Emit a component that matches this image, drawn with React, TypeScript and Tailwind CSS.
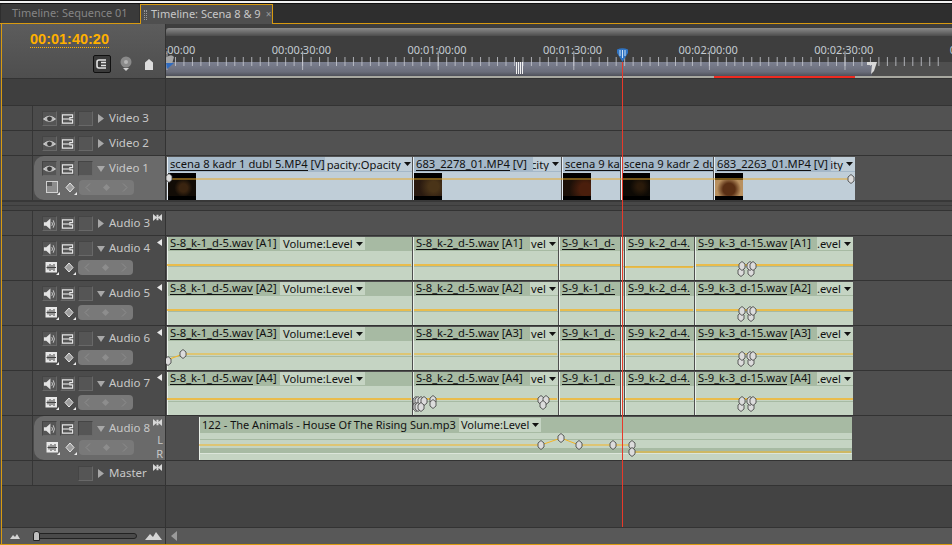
import type { ReactNode } from 'react';

const FONT = "font-['Noto_Sans',sans-serif]";
const AUDIO_X: [number, number][] = [[167, 411], [414, 557], [560, 620], [625, 693], [696, 853]];

function Eye() {
  return (
    <svg width="14" height="14" viewBox="0 0 14 14">
      <path d="M0.5 7 Q7 1 13.5 7 Q7 12 0.5 7Z" fill="#b8b8b8" stroke="#e8e8e8" strokeWidth="0.8" />
      <circle cx="7" cy="6.8" r="2.6" fill="#3a3a3a" />
    </svg>
  );
}

function Film() {
  return (
    <svg width="14" height="14" viewBox="0 0 14 14">
      <path d="M1.5 2.5H12.5V5.5H9.5V8H12.5V11.5H1.5Z" fill="none" stroke="#e8e8e8" strokeWidth="1.2" />
      <path d="M2 7H9" stroke="#e8e8e8" strokeWidth="1.2" />
    </svg>
  );
}

function Speaker() {
  return (
    <svg width="14" height="14" viewBox="0 0 14 14">
      <path d="M1 5H3.5L8 1V13L3.5 9H1Z" fill="#e4e4e4" />
      <path d="M9.5 5Q11 7 9.5 9M11 3Q13.6 7 11 11" fill="none" stroke="#cfcfcf" strokeWidth="1" />
    </svg>
  );
}

function CollapseBox() {
  return (
    <svg width="14" height="14" viewBox="0 0 14 14">
      <rect x="0.5" y="0.5" width="11" height="11" fill="#8c8c8c" stroke="#d0d0d0" />
      <rect x="1" y="1" width="5" height="4" fill="#585858" />
      <path d="M14 11V14H11Z" fill="#eee" />
    </svg>
  );
}

function WaveBox() {
  return (
    <svg width="14" height="14" viewBox="0 0 14 14">
      <rect x="0.5" y="1" width="11.5" height="10.5" fill="#e8e8e8" />
      <path d="M1.5 6.5H11M3 4.5V8.5M5 3V10M7 4V9M9 3V10" stroke="#444" strokeWidth="1" />
      <path d="M14 11V14H11Z" fill="#eee" />
    </svg>
  );
}

function KeyDiamond() {
  return (
    <svg width="12" height="14" viewBox="0 0 12 14">
      <path d="M5 2L9 6.5L5 11L1 6.5Z" fill="#9d9d9d" stroke="#e8e8e8" />
      <path d="M12 11V14H9Z" fill="#eee" />
    </svg>
  );
}

function Caret({ open }: { open: boolean }) {
  return open ? (
    <svg width="8" height="8" viewBox="0 0 8 8"><path d="M0 1H8L4 7Z" fill="#a8a8a8" /></svg>
  ) : (
    <svg width="7" height="9" viewBox="0 0 7 9"><path d="M0 0L6 4.5L0 9Z" fill="#a8a8a8" /></svg>
  );
}

function Bowtie() {
  return (
    <svg width="9" height="7" viewBox="0 0 9 7"><path d="M0 0L3.5 3V0.8H5.5V3L9 0V7L5.5 4V6.2H3.5V4L0 7Z" fill="#d8d8d8" /></svg>
  );
}

function NavPill() {
  return (
    <div className="flex w-[55px] h-[15px] items-center justify-around rounded-[4px] bg-[#797979]">
      <svg width="6" height="9" viewBox="0 0 6 9"><path d="M5 0.5L1 4.5L5 8.5" fill="none" stroke="#8d8d8d" /></svg>
      <svg width="7" height="7" viewBox="0 0 7 7"><path d="M3.5 0L7 3.5L3.5 7L0 3.5Z" fill="#8d8d8d" /></svg>
      <svg width="6" height="9" viewBox="0 0 6 9"><path d="M1 0.5L5 4.5L1 8.5" fill="none" stroke="#8d8d8d" /></svg>
    </div>
  );
}

function IconBox({ children }: { children?: ReactNode }) {
  return (
    <div className="flex w-[15px] h-[15px] items-center justify-center border border-t-[#454545] border-l-[#454545] border-b-[#686868] border-r-[#686868] bg-[#555555]">
      {children}
    </div>
  );
}

type HeaderProps = {
  name: string;
  audio?: boolean;
  open?: boolean;
  selected?: boolean;
  master?: boolean;
  bowtie?: boolean;
  mono?: boolean;
  lr?: boolean;
};

function TrackHeader({ name, audio, open, selected, master, bowtie, mono, lr }: HeaderProps) {
  return (
    <div className="flex w-[164px] shrink-0 h-full border-r border-[#333333] bg-[#4b4b4b]">
      <div className="w-[31px] shrink-0 border-r border-[#363636]" />
      <div className={`relative flex flex-1 flex-col gap-[4px] pl-[8px] pt-[5px] ${selected ? 'ml-[1px] rounded-l-[10px] bg-[#6a6a6a]' : ''}`}>
        <div className={`flex items-center ${selected ? '' : 'ml-[1px]'}`}>
          {master ? (
            <div className="w-[36px]" />
          ) : (
            <div className="flex gap-[3px] mr-[3px]">
              <IconBox>{audio ? <Speaker /> : <Eye />}</IconBox>
              <IconBox><Film /></IconBox>
            </div>
          )}
          <IconBox />
          <div className="flex w-[16px] justify-center"><Caret open={!!open} /></div>
          <span className="-mt-[2px] text-[11.5px] leading-[15px] text-[#c8c8c8]">{name}</span>
        </div>
        {open && (
          <div className="flex items-center">
            <div className="flex w-[21px] justify-center">{audio ? <WaveBox /> : <CollapseBox />}</div>
            <div className="flex w-[16px] justify-center"><KeyDiamond /></div>
            <NavPill />
          </div>
        )}
        {bowtie && <div className="absolute right-[3px] top-[3px] flex"><Bowtie /></div>}
        {mono && (
          <svg className="absolute right-[2px] top-[3px]" width="6" height="7" viewBox="0 0 6 7"><path d="M5 0V7L0 3.5Z" fill="#e8e8e8" /></svg>
        )}
        {lr && (
          <div className="absolute right-[2px] top-[17px] flex flex-col gap-[1px] text-[11px] leading-[13px] text-[#c8c8c8] items-end">
            <span>L</span>
            <span>R</span>
          </div>
        )}
      </div>
    </div>
  );
}

type ClipData = {
  w: number;
  name: string;
  tag?: string;
  drop?: string;
  dropW?: number;
  thumb?: string;
  gap?: number;
};

const Arrow = () => (
  <svg className="shrink-0 ml-[3px]" width="7" height="4" viewBox="0 0 7 4"><path d="M0 0H7L3.5 4Z" fill="#111" /></svg>
);

function VideoClip({ c }: { c: ClipData }) {
  return (
    <div className="flex flex-col shrink-0 h-full border-l border-[#e6eef5] bg-[#c0ced8] overflow-hidden" style={{ width: c.w, marginRight: c.gap ?? 1 }}>
      <div className="flex h-[15px] shrink-0 items-start bg-[#a5b8c8] pl-[2px] text-[11.2px] leading-[13px] text-[#111] whitespace-nowrap overflow-hidden">
        <span className="border-b border-[#111]">{c.name}</span>
        {c.tag && <span className="ml-[3px]">{c.tag}</span>}
        {c.drop && (
          <span className="ml-auto flex h-[14px] shrink-0 items-center justify-end overflow-hidden bg-[#c0ced8] pr-[2px]" style={{ width: c.dropW }}>
            {c.drop}<Arrow />
          </span>
        )}
      </div>
      <div className={`mt-[1px] h-[29px] w-[28px] ${c.thumb}`} />
    </div>
  );
}

function AudioClip({ c }: { c: ClipData }) {
  return (
    <div className="flex flex-col shrink-0 h-full border-l border-[#e9f0e8] bg-[#c5d4c3] overflow-hidden" style={{ width: c.w, marginRight: c.gap ?? 1 }}>
      <div className="flex h-[14px] shrink-0 items-start bg-[#a7baa3] pl-[2px] text-[11.2px] leading-[12px] text-[#111] whitespace-nowrap overflow-hidden">
        <span className="border-b border-[#111]">{c.name}</span>
        {c.tag && <span className="ml-[3px]">{c.tag}</span>}
        {c.drop && (
          <span className={`${c.name.includes('k-1_d-5') ? 'ml-[3px]' : 'ml-auto'} flex h-[13px] shrink-0 items-center justify-end overflow-hidden bg-[#c5d4c3] pr-[2px]`} style={{ width: c.dropW }}>
            {c.drop}<Arrow />
          </span>
        )}
      </div>
      <div className="h-[16px] shrink-0 border-b border-[#a7baa3]" />
    </div>
  );
}

const audioClips = (n: number): ClipData[] => [
  { w: 245, name: 'S-8_k-1_d-5.wav', tag: `[A${n}]`, drop: 'Volume:Level', dropW: 85 },
  { w: 145, name: 'S-8_k-2_d-5.wav', tag: `[A${n}]`, drop: 'vel', dropW: 28 },
  { w: 61, name: 'S-9_k-1_d-' },
  { w: 3, name: '' },
  { w: 69, name: 'S-9_k-2_d-4.' },
  { w: 158, name: 'S-9_k-3_d-15.wav', tag: `[A${n}]`, drop: '.evel', dropW: 36, gap: 0 },
];

const THUMB_A = "bg-[linear-gradient(#000_0_7px,transparent_7px_23px,#000_23px),radial-gradient(circle_at_55%_55%,#3a2410_0_4px,#120c06_9px)]";
const THUMB_B = "bg-[linear-gradient(#000_0_7px,transparent_7px_23px,#000_23px),radial-gradient(circle_at_70%_50%,#4a3418_0_5px,#2a1a10_14px)]";
const THUMB_C = "bg-[linear-gradient(#000_0_7px,transparent_7px_23px,#000_23px),radial-gradient(circle_at_80%_60%,#4a1e0c_0_6px,#1c1008_16px)]";
const THUMB_D = "bg-[linear-gradient(#000_0_7px,transparent_7px_23px,#000_23px),radial-gradient(circle_at_65%_50%,#2a1a0a_0_3px,#0e0a05_10px)]";
const THUMB_E = "bg-[linear-gradient(#000_0_7px,transparent_7px_23px,#000_23px),radial-gradient(circle_at_50%_60%,#5a2f14_0_6px,#b8905f_12px)]";

const videoClips: ClipData[] = [
  { w: 245, name: 'scena 8 kadr 1 dubl 5.MP4', tag: '[V]', drop: 'pacity:Opacity', dropW: 88, thumb: THUMB_A },
  { w: 148, name: '683_2278_01.MP4', tag: '[V]', drop: 'acity', dropW: 28, thumb: THUMB_B },
  { w: 58, name: 'scena 9 ka', thumb: THUMB_C },
  { w: 92, name: 'scena 9 kadr 2 du', thumb: THUMB_D },
  { w: 141, name: '683_2263_01.MP4', tag: '[V]', drop: 'ity', dropW: 24, gap: 0, thumb: THUMB_E },
];

function Key({ x, y }: { x: number; y: number }) {
  return <polygon points={`${x},${y - 4.5} ${x + 3},${y - 2} ${x + 3},${y + 2} ${x},${y + 4.5} ${x - 3},${y + 2} ${x - 3},${y - 2}`} fill="#dcdcdc" stroke="#3a3a3a" strokeWidth="0.8" />;
}

function Cluster() {
  return (
    <>
      <Key x={741} y={36} />
      <Key x={751} y={36} />
      <Key x={742} y={30} />
      <Key x={750} y={30} />
      <Key x={753} y={30} />
    </>
  );
}

function Overlay({ h, children }: { h: number; children: ReactNode }) {
  return (
    <svg className="absolute left-0 top-0 pointer-events-none" width="786" height={h} viewBox={`166 0 786 ${h}`}>
      {children}
    </svg>
  );
}

const orangeLines = (y: number, dy = 0) => (
  <>
    {AUDIO_X.map(([a, b], i) => (
      <line key={i} x1={a} x2={b} y1={i === 3 ? y + dy : y} y2={i === 3 ? y + dy : y} stroke="#f5b525" strokeWidth="1.5" />
    ))}
  </>
);

function AudioRow({ n, tag, children }: { n: number; tag: number; children?: ReactNode }) {
  return (
    <div className="flex h-[45px] border-t border-[#333333] bg-[#4f4f4f]">
      <TrackHeader name={`Audio ${n}`} audio open mono />
      <div className="relative flex flex-1 pl-[1px] pt-[1px] pb-0">
        {audioClips(tag).map((c, i) => <AudioClip key={i} c={c} />)}
        <Overlay h={44}>{children}</Overlay>
      </div>
    </div>
  );
}

function EmptyRow({ name, h, audio, bowtie, master }: { name: string; h: string; audio?: boolean; bowtie?: boolean; master?: boolean }) {
  return (
    <div className={`flex ${h} border-t border-[#333333] bg-[#525252]`}>
      <TrackHeader name={name} audio={audio} bowtie={bowtie} master={master} />
      <div className="flex-1" />
    </div>
  );
}

function Ruler() {
  const minor = Array.from({ length: 92 }, (_, i) => 1 + i * 8.475);
  const major = Array.from({ length: 6 }, (_, i) => 1 + i * 135.6);
  return (
    <div className="relative flex-1 flex flex-col bg-[#3e3e3e] overflow-hidden">
      <div className="mt-[4px] h-[8px] rounded-tl-[3px] bg-[linear-gradient(#8a8a8a,#6c6c6c_50%,#4c4c4c)]" />
      <div className="mt-[7px] flex -ml-[68px] text-[11px] leading-[13px] text-[#c4ccd2]">
        {['00:00:00:00', '00:00:30:00', '00:01:00:00', '00:01:30:00', '00:02:00:00', '00:02:30:00', '00:03:00:00'].map((t, i) => (
          <span key={i} className="w-[135.6px] shrink-0 text-center">{t}</span>
        ))}
      </div>
      <svg className="absolute left-0 top-[26px]" width="786" height="28" viewBox="0 0 786 28">
        <defs>
          <linearGradient id="wa" x1="0" y1="0" x2="0" y2="1">
            <stop offset="0" stopColor="#7c8090" />
            <stop offset="0.7" stopColor="#6a6d7a" />
            <stop offset="1" stopColor="#4f515a" />
          </linearGradient>
        </defs>
        <rect x="0" y="12" width="706" height="14" fill="url(#wa)" />
        <rect x="706" y="12" width="80" height="14" fill="#4f4f4f" />
        <rect x="0" y="26" width="786" height="2" fill="#a8a8a0" />
        <rect x="548" y="26" width="141" height="2" fill="#ee2a20" />
        {minor.map((x, i) => <line key={i} x1={x} x2={x} y1="7" y2="16" stroke="#c9ccd2" strokeWidth="0.8" />)}
        {major.map((x, i) => <line key={i} x1={x} x2={x} y1="1" y2="20" stroke="#c9ccd2" strokeWidth="0.8" />)}
        {[350.5, 352.5, 354.5, 356.5].map((x) => <line key={x} x1={x} x2={x} y1="12" y2="24" stroke="#f0f0f0" strokeWidth="1" />)}
        <path d="M701 12H711L708 21L705 24L706 15H701Z" fill="#d8d8d8" />
        <path d="M0 8Q5 3 8 7L6 14L1 17Z" fill="#a5a5a5" />
      </svg>
      <svg className="absolute left-0 top-[39px]" width="10" height="8" viewBox="0 0 10 8"><path d="M0 0H8L1 6Z" fill="#2f6bc0" /></svg>
    </div>
  );
}

export default function App() {
  return (
    <div className={`relative flex h-[545px] w-[952px] flex-col overflow-hidden bg-[#4f4f4f] ${FONT}`}>
      <div className="h-[1px] bg-[#111]" />
      <div className="h-[2px] bg-[#f2f2f2]" />
      <div className="h-[1px] bg-[#111]" />
      {/* tabs */}
      <div className="flex h-[20px] shrink-0 bg-[#2e2e2e] border-b border-[#d89a10] pl-[1px]">
        <div className="flex w-[138px] h-[19px] items-center rounded-t-[2px] bg-[#3a3a3a] pl-[11px] text-[11px] text-[#858585] whitespace-nowrap">Timeline: Sequence 01</div>
        <div className="ml-[1px] flex w-[133px] h-[20px] items-center border border-b-0 border-[#d89a10] bg-[#4f4f4f] pl-[3px] text-[11px] text-[#c8c8c8] whitespace-nowrap z-10">
          <span className="mr-[4px] h-[10px] w-[3px] border-l border-r border-dotted border-[#999]" />
          <span>Timeline: Scena 8 &amp; 9</span>
          <span className="ml-[5px] text-[10px] text-[#999]">×</span>
        </div>
      </div>

      <div className="flex flex-1 flex-col border-l border-[#d89a10] ml-[1px]">
        {/* header */}
        <div className="flex h-[54px] shrink-0">
          <div className="flex w-[164px] shrink-0 flex-col bg-[linear-gradient(#5c5c5c,#4e4e4e)] border-r border-[#333]">
            <div className="mt-[8px] ml-[28px] w-max border-b border-dotted border-[#ffb000] text-[14.5px] font-bold leading-[15px] font-['Liberation_Sans',sans-serif] text-[#ffb000]">00:01:40:20</div>
            <div className="mt-[7px] ml-[91px] flex items-center">
              <div className="flex w-[18px] h-[18px] items-center justify-center rounded-[2px] border border-[#111] bg-[#3a3a3a]">
                <svg width="14" height="14" viewBox="0 0 14 14">
                  <path d="M11 3H4Q2 3 2 5V9Q2 11 4 11H11M6 5.5H11M6 8.5H11" fill="none" stroke="#e4e4e4" strokeWidth="1.6" />
                </svg>
              </div>
              <svg width="12" height="16" viewBox="0 0 12 16" className="ml-[9px]">
                <circle cx="6" cy="6" r="5.5" fill="#8a8a8a" />
                <circle cx="6" cy="6" r="2" fill="#b5b5b5" />
                <path d="M3 12H9L6 15Z" fill="#d0d0d0" />
              </svg>
              <svg width="8" height="11" viewBox="0 0 8 11" className="ml-[13px]"><path d="M4 0L8 3.5V11H0V3.5Z" fill="#dcdcdc" /></svg>
            </div>
          </div>
          <Ruler />
        </div>

        {/* empty strip */}
        <div className="flex h-[27px] shrink-0 border-t border-[#333] bg-[#3f3f3f]">
          <div className="w-[164px] border-r border-[#333]" />
        </div>

        <EmptyRow name="Video 3" h="h-[25px]" />
        <EmptyRow name="Video 2" h="h-[25px]" />

        <div className="flex h-[45px] border-t border-[#333333] bg-[#525252]">
          <TrackHeader name="Video 1" open selected />
          <div className="relative flex flex-1 pl-[1px] pt-[1px]">
            {videoClips.map((c, i) => <VideoClip key={i} c={c} />)}
            <Overlay h={44}>
              <line x1="167" x2="851" y1="23" y2="23" stroke="#e8aa2c" strokeWidth="1" />
              <Key x={169} y={22} />
              <Key x={851} y={23} />
            </Overlay>
          </div>
        </div>

        {/* video / audio divider */}
        <div className="flex h-[10px] flex-col border-t-2 border-[#383838] bg-[#474747]">
          <div className="mt-[3px] h-[1px] bg-[#3a3a3a]" />
        </div>

        <EmptyRow name="Audio 3" audio bowtie h="h-[25px]" />

        <AudioRow n={4} tag={1}>
          {orangeLines(29, 2)}
          <Cluster />
        </AudioRow>
        <AudioRow n={5} tag={2}>
          {orangeLines(29)}
          <Cluster />
        </AudioRow>
        <AudioRow n={6} tag={3}>
          <polyline points="167,34 183,28 411,28" fill="none" stroke="#f5b525" strokeWidth="1.2" />
          {AUDIO_X.slice(1).map(([a, b]) => <line key={a} x1={a} x2={b} y1="28" y2="28" stroke="#f5b525" strokeWidth="1.2" />)}
          <Key x={183} y={28} />
          <Key x={168} y={35} />
          <Cluster />
        </AudioRow>
        <AudioRow n={7} tag={4}>
          {orangeLines(28)}
          <Key x={416} y={30} /><Key x={418} y={30} /><Key x={421} y={30} /><Key x={424} y={30} />
          <Key x={416} y={36} /><Key x={418} y={36} /><Key x={421} y={36} />
          <Key x={433} y={29} /><Key x={433} y={33} />
          <Key x={541} y={29} /><Key x={546} y={29} /><Key x={543} y={34} />
          <Cluster />
        </AudioRow>

        {/* Audio 8, the music track */}
        <div className="flex h-[45px] border-t border-[#333333] bg-[#4f4f4f]">
          <TrackHeader name="Audio 8" audio open selected bowtie lr />
          <div className="relative flex-1 pt-[1px] pl-[33px] pr-[100px]">
            <div className="flex h-full flex-col border-l border-[#e9f0e8] bg-[#c5d4c3]">
              <div className="flex h-[16px] shrink-0 items-center bg-[#a7baa3] pl-[2px] text-[11px] text-[#111] whitespace-nowrap">
                <span>122 - The Animals - House Of The Rising Sun.mp3</span>
                <span className="ml-[3px] flex h-[14px] items-center bg-[#c5d4c3] px-[2px]">Volume:Level<Arrow /></span>
              </div>
              <div className="h-[7px] border-b border-[#a7baa3]" />
              <div className="h-[8px]" />
              <div className="h-[6px] border-b border-[#dbe5da] bg-[#a7baa3]" />
            </div>
            <Overlay h={44}>
              <polyline points="199,29 541,29 561,22 579,29 632,29" fill="none" stroke="#f5b525" strokeWidth="1" />
              <line x1="632" x2="851" y1="36" y2="36" stroke="#f5b525" strokeWidth="1.2" />
              <Key x={541} y={29} />
              <Key x={561} y={22} />
              <Key x={579} y={29} />
              <Key x={613} y={29} />
              <Key x={632} y={29} />
              <Key x={632} y={36} />
            </Overlay>
          </div>
        </div>

        <EmptyRow name="Master" bowtie master h="h-[25px]" />

        {/* empty space under the tracks */}
        <div className="flex flex-1 border-t border-[#333] bg-[#434343]">
          <div className="w-[164px] border-r border-[#333]" />
        </div>

        {/* zoom and scroll bar */}
        <div className="flex h-[17px] shrink-0 border-t border-[#333] bg-[#585858]">
          <div className="flex w-[164px] items-center border-r border-[#333] pl-[8px]">
            <svg width="10" height="6" viewBox="0 0 10 6"><path d="M0 6L3 2L5 4L7 1L10 6Z" fill="#d4d4d4" /></svg>
            <div className="relative ml-[14px] h-[6px] w-[103px] rounded-full border border-[#222] bg-[#4a4a4a]">
              <div className="absolute -left-[2px] -top-[3px] h-[10px] w-[7px] rounded-t-[3px] bg-[#c0c0c0] border border-[#222]" />
            </div>
            <svg className="ml-[8px]" width="17" height="8" viewBox="0 0 17 8"><path d="M0 8L5 2L8 5L11 0L17 8Z" fill="#d4d4d4" /></svg>
          </div>
          <div className="flex flex-1 items-center pl-[5px]">
            <svg width="6" height="10" viewBox="0 0 6 10"><path d="M6 0V10L0 5Z" fill="#9a9a9a" /></svg>
          </div>
        </div>
      </div>
      <div className="h-[1px] bg-[#d89a10]" />

      {/* playhead */}
      <div className="absolute left-[622px] top-[62px] h-[465px] w-[1px] bg-[#e8392a]" />
      <svg className="absolute left-[617px] top-[48px]" width="11" height="14" viewBox="0 0 11 14">
        <path d="M0 1.5Q5.5 -1 11 1.5V5L5.5 14L0 5Z" fill="#2f74c4" />
        <path d="M3 2V8M5.5 2V10M8 2V8" stroke="#cfe2f7" strokeWidth="1" />
      </svg>
    </div>
  );
}
